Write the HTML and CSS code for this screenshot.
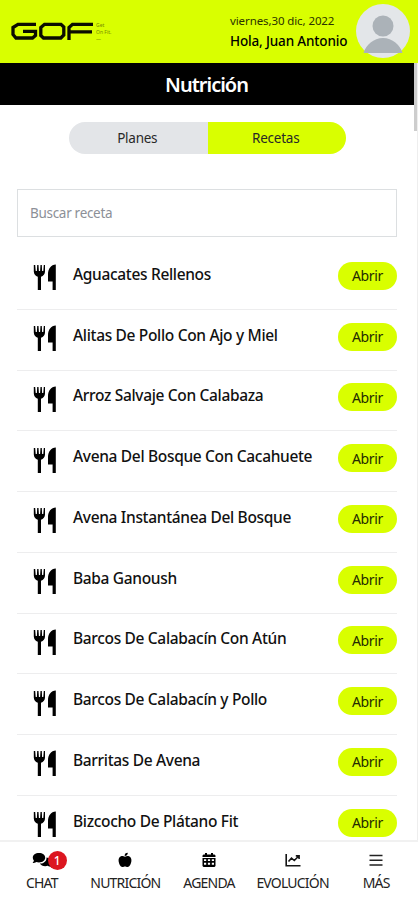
FILE: index.html
```html
<!DOCTYPE html>
<html lang="es">
<head>
    <meta charset="UTF-8">
    <meta name="viewport" content="width=device-width, initial-scale=1.0">
    <title>Nutrición</title>
    <link rel="stylesheet" href="styles.css">
</head>
<body>
    <!-- Shared icons -->
    <svg class="sprite" aria-hidden="true">
        <symbol id="cutlery" viewBox="0 0 24 26">
            <path d="M.8 1h1.400l.5 6h1.200l.3-6h1.300l.4 6h1.200l.4-6h1.300l.3 6h1.200l.5-6h1.200v6.500c0 2.500-1.600 4.600-4 5.300V26H4.800V12.800C2.400 12.100.8 10 .8 7.500z"/>
            <path d="M22.800 0.500V26h-3.200v-8.500h-4.600V10c0-5 3-9.500 7.800-9.500z"/>
        </symbol>
    </svg>

    <header class="header">
        <div class="logo">
            <svg class="logo-mark" width="84" height="19" viewBox="0 0 84 19" aria-label="GOF">
                <g fill="none" stroke="#0b0d00" stroke-width="3.300">
                    <path d="M26 2.300H8L3 5.500V12.500L6 16H22.500L25.500 13.500V9.300H13"/>
                    <path d="M34.500 2.300H51L53.800 5V13L50.800 16H33.500L30.800 13.500V5.500Z"/>
                    <path d="M83 2.300H62.500L59 5.500V18M59 9.800H82"/>
                </g>
            </svg>
            <div class="logo-tag">Get<br>On Fit.<br>—</div>
        </div>
        <div class="user">
            <div class="user-text">
                <div class="date">viernes,30 dic, 2022</div>
                <div class="hello">Hola, Juan Antonio</div>
            </div>
            <svg class="avatar" viewBox="0 0 54 54">
                <circle cx="27" cy="27" r="27" fill="#e3e6e9"/>
                <circle cx="27" cy="22" r="10.500" fill="#abb2b8"/>
                <path d="M7.500 49C10 41 17.500 34 27 34s17 7 19.500 15z" fill="#abb2b8"/>
            </svg>
        </div>
    </header>

    <main class="content">
        <h1 class="title">Nutrición</h1>
        <div class="scroll-thumb"></div>

        <div class="tabs">
            <button class="tab">Planes</button>
            <button class="tab active">Recetas</button>
        </div>

        <input class="search" type="text" placeholder="Buscar receta" aria-label="Buscar receta">

        <ul class="recipes">
            <li><svg class="cutlery"><use href="#cutlery"/></svg><span class="name">Aguacates Rellenos</span><button class="open">Abrir</button></li>
            <li><svg class="cutlery"><use href="#cutlery"/></svg><span class="name">Alitas De Pollo Con Ajo y Miel</span><button class="open">Abrir</button></li>
            <li><svg class="cutlery"><use href="#cutlery"/></svg><span class="name">Arroz Salvaje Con Calabaza</span><button class="open">Abrir</button></li>
            <li><svg class="cutlery"><use href="#cutlery"/></svg><span class="name">Avena Del Bosque Con Cacahuete</span><button class="open">Abrir</button></li>
            <li><svg class="cutlery"><use href="#cutlery"/></svg><span class="name">Avena Instantánea Del Bosque</span><button class="open">Abrir</button></li>
            <li><svg class="cutlery"><use href="#cutlery"/></svg><span class="name">Baba Ganoush</span><button class="open">Abrir</button></li>
            <li><svg class="cutlery"><use href="#cutlery"/></svg><span class="name">Barcos De Calabacín Con Atún</span><button class="open">Abrir</button></li>
            <li><svg class="cutlery"><use href="#cutlery"/></svg><span class="name">Barcos De Calabacín y Pollo</span><button class="open">Abrir</button></li>
            <li><svg class="cutlery"><use href="#cutlery"/></svg><span class="name">Barritas De Avena</span><button class="open">Abrir</button></li>
            <li><svg class="cutlery"><use href="#cutlery"/></svg><span class="name">Bizcocho De Plátano Fit</span><button class="open">Abrir</button></li>
        </ul>
    </main>

    <nav class="bottom-nav">
        <a class="nav-item">
            <span class="icon-wrap">
                <svg width="20" height="16" viewBox="0 0 20 16">
                    <path d="M7 1c3.600 0 6.200 2 6.200 4.700S10.600 10.400 7 10.400c-1 0-2-.2-2.800-.5C3.300 10.600 2 11 .6 11c.7-.8 1.200-1.600 1.300-2.400C1.200 7.800.8 6.800.8 5.700.8 3 3.400 1 7 1z"/>
                    <path d="M14.500 5.500c2.800.5 4.700 2.200 4.700 4.300 0 1-.4 2-1.100 2.700.1.900.6 1.700 1.300 2.500-1.400 0-2.700-.5-3.600-1.200-3.200 1-6.700 0-8-2.200 4 .2 7-2.500 6.700-6.100z"/>
                </svg>
                <span class="badge">1</span>
            </span>
            <span class="label">CHAT</span>
        </a>
        <a class="nav-item">
            <svg width="14" height="16" viewBox="0 0 14 16">
                <path d="M7 4.700C5.500 4 4.200 3.800 3 4.300 1 5.100.4 7 .6 9c.3 2.700 1.700 6 3.900 6 1 0 1.500-.5 2.500-.5s1.500.5 2.500.5c2.200 0 3.600-3.300 3.900-6 .2-2-.4-3.900-2.400-4.700-1.200-.5-2.500-.3-4 .4z"/>
                <path d="M6.700 4C6.500 2 7.700.8 9.800.8 9.900 2.800 8.700 4 6.700 4z"/>
            </svg>
            <span class="label">NUTRICIÓN</span>
        </a>
        <a class="nav-item">
            <svg width="14" height="16" viewBox="0 0 14 16">
                <path d="M3 1h2v1.500h4V1h2v1.500h1.500l1 1V5H.5V3.500l1-1H3z"/>
                <path fill-rule="evenodd" d="M.5 6h13v8l-1 1h-11l-1-1zM2 7.200v1.900h2.200V7.200zm3.900 0v1.900h2.200V7.200zm3.900 0v1.900H12V7.200zM2 10.800v2h2.200v-2zm3.900 0v2h2.200v-2zm3.900 0v2H12v-2z"/>
            </svg>
            <span class="label">AGENDA</span>
        </a>
        <a class="nav-item">
            <svg width="16" height="16" viewBox="0 0 16 16" fill="none" stroke="#151515" stroke-width="1.600">
                <path d="M1.200 2v11.800H15.500M3.500 9.500L6.500 6.200 9.300 8.500 13.800 4M10.800 3.900h3.300v3"/>
            </svg>
            <span class="label">EVOLUCIÓN</span>
        </a>
        <a class="nav-item">
            <svg width="14" height="16" viewBox="0 0 14 16" fill="none" stroke="#222" stroke-width="1.500">
                <path d="M.5 3.500h13M.5 8.300h13M.5 13h13"/>
            </svg>
            <span class="label">MÁS</span>
        </a>
    </nav>
</body>
</html>
```
FILE: styles.css
```css
:root {
    --lime: #d9ff00;
    --text-color: #111;
    --line-color: #ededee;
}

* {
    box-sizing: border-box;
}

body {
    margin: 0;
    height: 900px;
    display: flex;
    flex-direction: column;
    overflow: hidden;
    background-color: #fff;
    color: var(--text-color);
    font-family: 'Noto Sans', 'Open Sans', sans-serif;
}

button {
    border: none;
    padding: 0;
    font-family: inherit;
    color: inherit;
}

.sprite {
    display: none;
}

/* --- Header --- */
.header {
    flex: none;
    height: 63px;
    padding: 0 8px 0 10px;
    display: flex;
    justify-content: space-between;
    background-color: var(--lime);
}

.logo {
    display: flex;
    padding-top: 22px;
    gap: 2px;
}

.logo-tag {
    font-size: 5px;
    line-height: 7px;
    color: #788c00;
}

.user {
    display: flex;
    padding-top: 4px;
}

.user-text {
    width: 126px;
    padding-top: 8px;
    white-space: nowrap;
}

.date {
    font-size: 11.5px;
    line-height: 18px;
    letter-spacing: -0.1px;
    color: #2c3300;
}

.hello {
    font-size: 13.5px;
    font-weight: 500;
    line-height: 22px;
    letter-spacing: -0.15px;
    color: #000;
}

.avatar {
    width: 54px;
    height: 54px;
}

/* --- Content --- */
.content {
    position: relative;
    flex: 1;
    min-height: 0;
    overflow: hidden;
    border-right: 1px solid #eee;
}

.title {
    margin: 0 3px 0 0;
    height: 42px;
    padding-right: 1px;
    background-color: #000;
    color: #fff;
    font-size: 20px;
    font-weight: 600;
    line-height: 43px;
    letter-spacing: -1px;
    text-align: center;
}

.scroll-thumb {
    position: absolute;
    top: 0;
    right: -1px;
    width: 4px;
    height: 68px;
    background-color: #cdcdcd;
}

.tabs {
    display: flex;
    width: 277px;
    height: 32px;
    margin: 17px 0 0 69px;
    border-radius: 16px;
    overflow: hidden;
}

.tab {
    flex: 1;
    padding: 0 2px 0 0;
    background-color: #e3e5e8;
    font-size: 13.5px;
    letter-spacing: -0.25px;
    color: #282828;
}

.tab.active {
    background-color: var(--lime);
}

.search {
    display: block;
    width: 380px;
    height: 48px;
    margin: 35px 0 0 17px;
    padding: 0 12px;
    border: 1px solid #dcdfe1;
    font-family: inherit;
    font-size: 13.5px;
    letter-spacing: -0.3px;
}

.search::placeholder {
    color: #8c9097;
}

.recipes {
    list-style: none;
    margin: 12px 20px 0 17px;
    padding: 0;
}

.recipes li {
    display: flex;
    align-items: center;
    height: 60.75px;
    padding: 0 0 6px 16px;
    border-bottom: 1px solid var(--line-color);
}

.cutlery {
    width: 24px;
    height: 26px;
    margin: 3px 16px 0 0;
    fill: #000;
}

.name {
    flex: 1;
    padding-bottom: 4px;
    font-size: 15.5px;
    font-weight: 500;
    letter-spacing: -0.33px;
    white-space: nowrap;
}

.open {
    width: 59px;
    height: 28px;
    border-radius: 14px;
    background-color: var(--lime);
    font-size: 14px;
    letter-spacing: -0.3px;
    color: #252b00;
}

/* --- Bottom nav --- */
.bottom-nav {
    flex: none;
    display: flex;
    height: 60px;
    border-top: 2px solid #f1f1f1;
    background-color: #fff;
}

.nav-item {
    flex: 1;
    display: flex;
    flex-direction: column;
    align-items: center;
    padding-top: 10px;
}

.nav-item svg {
    display: block;
}

.label {
    margin-top: 5px;
    font-size: 14px;
    line-height: 20px;
    letter-spacing: -0.8px;
    color: #222;
}

.icon-wrap {
    position: relative;
}

.badge {
    position: absolute;
    top: -1px;
    right: -15px;
    width: 19px;
    height: 19px;
    border-radius: 50%;
    background-color: #dc1620;
    color: #fff;
    font-size: 12px;
    font-weight: 500;
    line-height: 19px;
    text-align: center;
}
```
